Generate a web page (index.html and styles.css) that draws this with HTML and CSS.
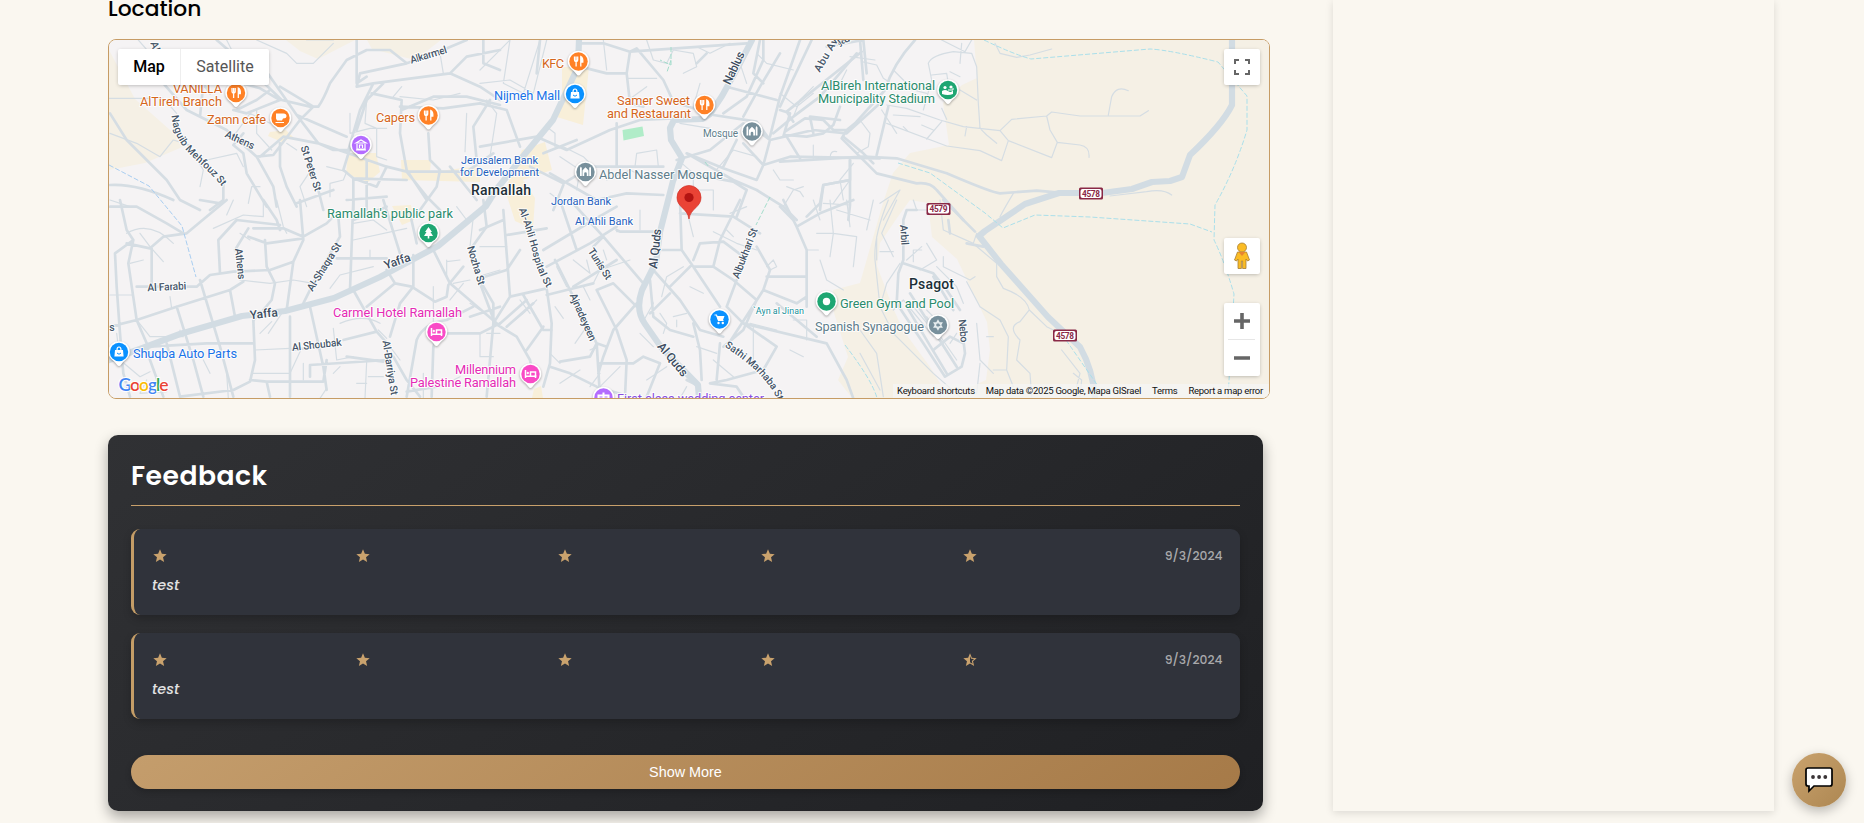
FILE: index.html
```html
<!DOCTYPE html>
<html lang="en">
<head>
<meta charset="utf-8">
<title>Location and feedback</title>
<link rel="stylesheet" href="styles.css">
</head>
<body>
<svg class="defs" width="0" height="0" aria-hidden="true">
  <symbol id="star" viewBox="0 0 24 24"><path d="M12 17.27 18.18 21l-1.64-7.03L22 9.24l-7.19-.61L12 2 9.19 8.63 2 9.24l5.46 4.73L5.82 21z"/></symbol>
  <symbol id="star-half" viewBox="0 0 24 24"><path d="m22 9.24-7.19-.62L12 2 9.19 8.63 2 9.24l5.46 4.73L5.82 21 12 17.27 18.18 21l-1.63-7.03zM12 15.4V6.1l1.71 4.04 4.38.38-3.32 2.88 1 4.28z"/></symbol>
</svg>
<div class="page">
  <main class="main">
    <h2 class="heading">Location</h2>
    <section class="map">
      <svg class="map-canvas" viewBox="109 40 1160 358" width="1160" height="358">
        <defs>
          <g id="pin"><path class="pin-shape" d="M0-10.8a10.8 10.8 0 0 1 10.8 10.8c0 6-5 7.500-8.600 12.500Q0 15.500-2.200 12.500C-5.800 7.500-10.800 6-10.800 0A10.800 10.800 0 0 1 0-10.800z"/><circle r="9.200" fill="currentColor"/></g>
          <g id="fork" fill="none" stroke="#fff" stroke-width="1.300"><path d="M-4-5v3q0 2 1.600 2T-.8-2v-3M-2.400-5V5"/><path d="M2.300 5V-5q2.400 1 2 5.500H2.500" fill="#fff"/></g>
          <g id="bag"><path fill="#fff" d="M-4-2h8l.6 6.500h-9.200z"/><path d="M-2-2q0-3 2-3t2 3" fill="none" stroke="#fff" stroke-width="1.200"/><path d="M-2 1q2 2.500 4 0" fill="none" stroke="#0a91ff"/></g>
          <g id="bed" fill="none" stroke="#fff" stroke-width="1.500"><path d="M-5-4V4M-5 2.200H5V-2H0V2"/><circle cx="-2.700" cy="-1" r=".9" fill="#fff" stroke-width=".6"/><path d="M5 1v3"/></g>
          <path id="mosque" fill="#fff" d="M-5.500 4v-8l.9-1.500.9 1.500v8zM5.500 4v-8l-.9-1.500-.9 1.500v8zM-3 4V-1.500Q-2-3 0-4.800 2-3 3-1.500V4H1.300V1.500a1.300 1.300 0 0 0-2.600 0V4z"/>
          <path id="naguib" d="M174.500 115Q176 138 196 156T224.500 185"/>
          <path id="marhaba" d="M726 344Q752 361 765 376T780 399"/>
          <path id="ahli" d="M521.500 208Q530.500 232 535.500 252T548.500 285"/>
        </defs>
        <rect x="109" y="40" width="1160" height="358" fill="#f5f3f4"/>
        <!-- open land -->
        <g fill="#f5f0e5">
          <path d="M974 40L977 78 962 85 943 103 949 145 910 153 893 173 883 203 860 283 833 290 834 313 848 357 838 380 852 398H1269V40z"/>
          <path d="M286 40H355L318 59 300 51zM367 40H441L415 60 372 49zM109 50L135 99 187 145 145 163 109 170z"/>
        </g>
        <path fill="#f5f3f4" d="M910 200L928 203 932 237 957 259 967 280 987 322 990 350 986 380 973 386 943 388 930 367 903 330 893 308 877 266 880 243 897 218z"/>
        <g fill="#f8efd9">
          <path d="M348 153L376 153 380 172 368 182 346 174zM401 160L431 160 430 172 480 166 480 182 402 180zM562 67L589 67 583 125 557 117 562 99zM522 150L545 142 552 170 523 180 535 198 533 229 515 221 505 190zM270 132L286 130 293 137 282 142 268 136zM392 206L411 205 414 220 402 225zM534 389L541 386 543 398H532z"/>
        </g>
        <path fill="#b0ecc8" d="M622.500 130l20-3.500 1.500 9.500-20.500 4.500z"/>

        <g class="road minor">
          <!-- north west -->
          <g transform="translate(100 0) scale(.33333)">
            <path d="M25 295H190L230 340M115 120L150 160M380 120L400 160H500M470 120L560 160 590 190 640 190 700 130M700 120H620M510 370L450 340 400 410M470 330L470 400 515 450M30 400L110 430 180 470 220 420 270 435M260 430L310 510 300 560M320 480L410 460 430 500M445 610L455 560 480 560M560 430L590 450M750 340V400L810 385H860M800 300L795 370 830 385V470L860 480M900 290L1000 300 1080 280M1160 300L1190 340 1170 470M1095 455L1100 340M1020 160L1030 220M905 260L880 290M680 500L740 515 730 540 690 550 690 590M640 500L600 560 620 620M30 600L90 620"/>
          </g>
          <g transform="translate(480 30) scale(.33333)">
            <path d="M0 120L50 70 90 30 70 160 130 190 180 30M0 160L90 150 160 190 200 30M200 290L225 310V350M370 30L380 120M500 30L520 90 560 100 580 60 640 70 650 110 610 130M660 160L640 230M650 50L690 70 750 40M440 145H530M445 210L500 170M465 410L470 370 530 360 535 410M240 380L300 420 290 480M250 350L310 380 340 410M600 280L690 295M700 430L760 360 830 380M600 395L640 430M640 430V500M750 550L800 530M780 100L800 160M830 70L860 100 940 120M1000 170L960 210 940 260M900 190L950 230 1000 190M1100 120L1070 180M1120 400L1080 450 1090 510M910 530L940 480 970 470M880 420L900 450 940 450M600 480H700V540M380 450L450 420 490 440M210 490L250 520"/>
          </g>
          <g transform="translate(780 30) scale(.33333)">
            <path d="M210 80L285 90M245 95L290 105 310 145 350 170M340 120L400 180 440 190M445 100Q455 75 520 65L575 70 590 110 595 220 600 295 620 315 650 340M485 30L555 65 575 30M545 40L540 100M445 100L455 150 430 240M455 135L500 130 510 190M510 125L540 140M540 180L590 210M320 225L380 235 480 270 550 290 660 302 695 268 800 258 815 246 900 258H1080L1105 242M985 255L995 200Q1010 165 1045 182M800 258L810 300 832 337 815 383 685 332 660 302M832 337L900 345Q930 350 927 382M685 332L665 392 600 362 500 348 320 280M425 285L460 300M440 327L485 275M560 290L555 318M500 268L485 235M305 240L350 310M340 255L420 260M370 290L385 305M645 40L660 70 710 82 750 75 815 57M700 490Q670 540 660 560M990 498L1100 485Q1150 475 1175 495M240 270L270 310 265 350 230 370M100 385V345M150 385Q150 360 170 365M20 470L60 485 70 500M210 525L130 520M210 450L160 520M300 520L360 480 310 570"/>
          </g>
          <!-- south west -->
          <g transform="translate(100 200) scale(.33333)">
            <path d="M490 0V50L430 45 340 85M530 0L550 80 560 100M400 0L380 45M120 100L150 140 190 185M90 190L130 180M210 290L215 325M30 285H100M110 360L150 410H250M240 410V390M50 400L60 480 120 530 150 515M310 480L330 520M460 365L480 340M465 450L570 445M380 520L385 595M140 540L120 580 200 575M600 455L570 520H460M680 565L660 595M640 250L580 240M690 265L720 225 820 200M810 170V150M760 70L820 60 860 90M760 120L920 85M720 370Q790 340 840 370M835 390L860 415M870 440L900 480M700 385L710 480 760 470M800 485L795 595M805 530H850M770 550H800M610 490V540M1040 180V230M1080 180L1040 185M1060 250L1110 240M1000 260V480M970 520V595M1090 250L1050 300M1110 310L1140 330M1140 400V470H1180M1020 560L1080 530M1070 20L1100 60M1120 50L1110 140M1150 225L1200 210M700 520L720 500M80 100Q150 60 220 130M420 100L450 120M420 240L510 250 580 240M545 340L505 400M480 400L515 365"/>
          </g>
          <g transform="translate(480 200) scale(.33333)">
            <path d="M0 140H80M120 300L150 340M80 380L130 340 170 300M60 400H20M280 180L330 220 320 180M340 250L360 210 450 180M380 180L370 150M230 200L260 260M310 260L330 300M225 320L250 355M285 430L320 380M240 490L210 460M330 450L350 440M360 520L330 560M420 500L360 560M240 550L300 510M480 400L520 440M495 355L520 310 515 300M580 350L620 340M590 360V380M545 290L560 230 610 200M540 340L560 370 550 400M625 50L640 110M480 30V90M410 95H530M700 95L770 130 830 150M740 90L760 110M630 260L670 280M810 370L890 390M860 200L880 180 890 200 870 210M930 450L970 470M980 150H1015M1020 180L1040 240 1090 270M1000 0L1020 60M1050 0L1060 100 1130 110 1120 200M1100 0L1110 80M1010 100L1060 100 1050 170M1070 30L1170 60M1180 0L1160 90M940 360L980 360V420M820 380V500M650 440L710 460M700 480L760 530M500 540L560 500M620 560L600 595M660 590L720 595"/>
          </g>
          <!-- south east -->
          <g transform="translate(860 200) scale(.33333)">
            <path d="M85 0Q40 110 45 180L60 320M50 180L50 110M110 0L65 100 100 170M60 155L100 155M160 185V150L185 150M140 180L185 140M250 170V200L330 240 345 230M180 210L230 180 200 130M240 0L250 90 340 130 350 100M345 135L410 190V230L430 265Q500 290 508 330L480 365Q440 380 480 420M320 245L360 320 420 360 445 410 440 510 460 560M508 330L560 380 600 400M480 420L470 480 510 520 515 590M605 450L660 520 650 560M640 520L665 540 660 590M100 330L130 300 220 410M60 320L80 250 120 190M60 320L100 400 220 520 300 590M0 390L50 460 70 590M240 570V590M220 400L260 380M230 200L290 260 310 310M200 330L240 370M160 320L250 430M200 350L290 480M290 400L270 430M350 370L360 480 400 520M360 490L350 580M380 410L400 410M400 510L440 510M160 0L170 30 210 30M0 460L60 570"/>
          </g>
        </g>
        <g class="road">
          <g transform="translate(100 0) scale(.33333)">
            <path d="M350 120L420 180 545 300 630 320H655Q670 300 690 250L740 180 800 150 870 150 920 190 980 170 1100 120M30 340L80 420 200 540 240 600 300 630M30 555Q110 550 220 600M190 250L260 330 290 345 380 390 470 470 520 465 600 360 640 320M500 215L590 345 655 430M590 345L740 410M540 260L640 320M425 250L480 265 540 300 440 340 400 330M410 330L470 300 510 270M430 400L400 435 430 460 440 520 500 620M470 470L520 560 530 620M480 470L550 410 655 430 745 460 860 500 920 515H1100L1180 460M540 430V500L560 560 590 620M655 430L700 450 750 450M750 445L730 510 760 535 920 540M770 120V250L800 230M920 190L780 220 770 260 820 250 1050 220 1100 170 1200 150M820 250L780 330 745 450M850 250L800 300 770 390M815 280L905 300 900 400 920 510 980 600M905 330L1000 290H1100L1200 315M900 320L1030 325 1140 310M985 400L990 480 1020 510 1010 560 960 630M1150 120V190L1200 210M1050 220L1140 260 1200 300M1170 300L1120 380 1130 480M920 515L980 590 1020 630M1050 500L1130 600M860 500L830 560 760 535V630M800 480V630M740 600L860 590M590 610L700 570M300 350L310 250 330 280M655 570L670 630M370 550L370 600 330 630"/>
          </g>
          <g transform="translate(480 30) scale(.33333)">
            <path d="M0 220L80 240 120 350M0 350L170 320 260 360 390 300 480 270 580 265M300 40L370 40 450 65 800 40M300 110L380 130 440 130 450 65 470 55 550 150 580 215 640 235M440 130L450 220 490 230M410 280V410H550M180 30L170 130M190 370L290 330M150 410L250 460 300 430M210 430L350 510 440 490 550 495M250 465L220 540M310 410L410 410M590 390L690 360 790 280 830 300 870 330 1000 300 1100 310 1200 220M740 170L890 210M650 100L680 70M700 255L830 275 870 330M730 250L800 200 850 90 850 30M790 260L840 170 900 70M840 30L820 130 850 160M870 320L900 200 960 30M880 310L940 260 1020 200 1130 70M1040 50L1150 30 1160 130M1000 310L990 260 1080 270M870 330L850 405 930 380 1200 385M790 340L850 405 830 450 730 415 620 370M620 370L760 450 830 480 910 530 950 570M730 410L770 330M590 430L680 440 760 455 800 480 770 560M1110 390V450L1030 465 1020 540M1090 320L1150 370 1180 400"/>
          </g>
          <g transform="translate(780 30) scale(.33333)">
            <path d="M15 305L75 265 130 270 160 300 200 300 185 325 290 430 410 460Q450 455 470 480L550 570M15 315L80 320 130 310 160 285 180 230M240 30L250 150M245 65L20 245 40 275M405 30Q340 100 315 180L225 280 200 300M325 230L290 375M10 320L30 250 0 240M0 230L95 30M20 320L60 385M0 395L250 380 350 385 500 430Q640 490 660 490L770 482 830 487M210 390V525L205 570M210 450L130 465 120 520 80 560M0 530L40 570"/>
          </g>
          <g transform="translate(100 200) scale(.33333)">
            <path d="M30 20L110 20 200 70 250 100M300 0L360 10M60 0L80 90 100 120 85 190 110 360 140 430 150 480 190 590M100 120L45 160 50 260 60 400 70 520 90 590M80 130L150 145 190 110 260 100 380 0M155 145V260L110 260H290L330 225 400 215 510 210 580 185M600 0L610 120 580 185 560 330M460 85H550L610 110 680 70 700 50M490 0L530 60 540 90M360 220L355 120 410 60 540 75M495 120L500 200 525 250 515 300 490 330M445 110L500 130 610 115M445 85L405 150M110 360L230 320 390 270 430 245M300 240L360 440 400 590M230 320L280 480 310 590M390 270L405 350M30 380L110 360M150 440L320 430 460 430M200 430L240 590M460 360L465 480 450 545 400 570 240 590M450 540L500 545 670 545 680 480M500 545L510 590M630 320L670 500 680 570M570 350L570 590M570 450L660 440M730 420L830 395 760 270M830 395L870 440M870 410L900 310 940 260M630 530V495L860 480M750 270L760 0M710 175L860 175M760 60L860 20M850 0L900 160M860 210L885 250 935 260 1005 305 1040 290 1045 255 1090 200M940 165V260M800 320L885 250M1000 150L1050 250 1190 370M1040 400H1140L1200 370M1120 320L1040 360Q970 370 950 420L920 590M880 470L920 540 960 590M1000 440L995 590M1150 0L1160 80 1110 150M1145 250L1180 310V380M1200 320L1110 350M715 50L720 110 650 230 610 310M930 40L950 130M920 575L1010 560M740 470L850 485"/>
          </g>
          <g transform="translate(480 200) scale(.33333)">
            <path d="M70 30L80 160 90 290 40 370 30 480 20 590M80 105L200 85M70 60L0 90M120 150L80 210 0 235M0 250L45 370 110 410 150 480 160 530M90 290L200 265 215 370 210 490 190 560M130 285L190 390H215M160 310L80 380M190 380L140 450M55 375L140 300M200 200L330 130 410 80M190 150L340 60 410 20M240 0L290 150M270 0L370 110 490 250M410 90L420 95H540M370 110L340 140M225 180L350 430 360 590M410 180L280 260M350 270L410 390 440 480 435 590M350 270L400 250 470 320M200 285L260 270 340 250M470 310L400 390 370 470 355 520M210 500L270 520 350 560 450 590M240 485L330 470 350 430 380 440M360 490L460 490 490 470 540 490 500 590M520 210L600 300 660 390 730 410M510 240L520 350 570 390 640 410M600 0L605 150 640 200 720 320M545 150L605 150M635 195L570 260M570 280L510 340M640 200L700 200 760 240 830 300 790 390 730 440M600 40L760 50 840 100M780 0L720 120 700 200M640 180L660 130 730 125 790 170M830 140L870 210 850 270 740 440M770 240L740 320 790 370 890 440 850 510 740 540 690 550M860 230H980V320M850 270L950 310 980 290 980 150 950 80 910 0M950 80L1020 40M790 370L1040 430 1100 540 1120 595M890 310L1010 410M640 370L660 450 665 540M720 430L710 540M690 550L770 560 790 590M620 540L640 550M1020 40L1120 0"/>
          </g>
          <g transform="translate(860 200) scale(.33333)">
            <path d="M170 30H140L130 60V180L115 220 110 310 190 430 255 530 305 500 315 460 310 420M130 190L220 220 260 270 300 330M150 280L290 500M140 320L260 520M220 230L280 330M310 430L270 410 220 450M250 0L345 95M320 130L370 140M265 60L270 100"/>
          </g>
        </g>
        <!-- arterial roads -->
        <g class="road wide">
          <path d="M752 40L738 67 722 96 710 114 702 119 674 120 670 128 671 140 682 158 673 181 660 232M579 40L578 67 553 120 520 160 496 190 486 206 438 246 380 277 334 298 285 311 242 316 180 334 140 349 109 360M660 232L656 262 642 290Q635 310 645 324L661 347 698 385 699 398"/>
          <path d="M1232 40L1232 105Q1222 125 1190 155L1182 177 1170 181 1152 182 1132 189 1102 193H1059L1025 204 985 231 979 236 1001 264 1048 317 1080 347Q1093 370 1095 398"/>
        </g>
        <g class="water"><path d="M984 40Q1013 54 1031 59L1150 49Q1170 50 1218 62L1247 96V130Q1235 170 1215 205L1214 240Q1224 260 1234 294L1228 398M898 163L930 173 985 213 1003 228 1035 215 1090 217 1190 224 1212 232M1066 340L1098 386M845 345Q872 380 877 398"/><path stroke="#a8cdf0" d="M109 165L149 186 182 226 196 277"/><path stroke="#a3dccb" d="M671 47V65L660 60M671 60L667 72M770 197L756 225M705 162L709 167"/></g>

        <!-- place labels -->
        <g class="label street">
          <text y="-1.500" transform="translate(429 57) rotate(-17)" textLength="38">Alkarmel</text>
          <text y="-1.500" transform="translate(239 142) rotate(24)" textLength="31">Athens</text>
          <text y="-1.500" transform="translate(309 169) rotate(72)" textLength="47">St Peter St</text>
          <text y="-1.500" transform="translate(238 264) rotate(84)" textLength="31">Athens</text>
          <text y="-1.500" transform="translate(326 268) rotate(-58)" textLength="55">Al-Shaqra St</text>
          <text y="-1.500" transform="translate(167 289) rotate(-3)" textLength="39">Al Farabi</text>
          <text y="-1.500" transform="translate(317 347) rotate(-6)" textLength="50">Al Shoubak</text>
          <text y="-1.500" transform="translate(474 266) rotate(73)" textLength="40">Nozha St</text>
          <text y="-1.500" transform="translate(388 368) rotate(81)" textLength="55">Al-Barriya St</text>
          <text y="-1.500" transform="translate(598 265) rotate(57)" textLength="35">Tunis St</text>
          <text y="-1.500" transform="translate(581 318) rotate(66)" textLength="51">Ajnadeyeen</text>
          <text y="-1.500" transform="translate(747 254) rotate(-69)" textLength="53">Albukhari St</text>
          <text y="-1.500" transform="translate(902 235) rotate(86)" textLength="20">Arbil</text>
          <text y="-1.500" transform="translate(961 331) rotate(84)" textLength="23">Nebo</text>
          <text y="-1.500" transform="translate(828 56) rotate(-60)" textLength="37">Abu Av</text>
          <text y="-1.500" transform="translate(844 42) rotate(-20)" textLength="13">Iyad</text>
          <text y="-1.500" transform="translate(153 47) rotate(70)">Al</text>
          <text y="-1.500" transform="translate(112 330)">s</text>
          <text class="path-text"><textPath href="#naguib">Naguib Mehfouz St</textPath></text>
          <text class="path-text"><textPath href="#marhaba">Sathi Marhaba St</textPath></text>
          <text class="path-text"><textPath href="#ahli">Al-Ahli Hospital St</textPath></text>
        </g>
        <g class="label avenue">
          <text y="-1.500" transform="translate(736 69) rotate(-65)" textLength="35">Nablus</text>
          <text y="-1.500" transform="translate(398 263.500) rotate(-19)" textLength="27">Yaffa</text>
          <text y="-1.500" transform="translate(264 316) rotate(-6)" textLength="28">Yaffa</text>
          <text y="-1.500" transform="translate(657.500 249) rotate(-84)" textLength="40">Al Quds</text>
          <text y="-1.500" transform="translate(671 361) rotate(50)" textLength="40">Al Quds</text>
        </g>
        <g class="label poi">
          <g fill="#d5661c"><text x="173" y="93" textLength="49">VANILLA</text><text x="140" y="106" textLength="82">AlTireh Branch</text><text x="207" y="124" textLength="59">Zamn cafe</text><text x="376" y="122" textLength="39">Capers</text><text x="542" y="68" textLength="22">KFC</text><text x="617" y="105" textLength="73">Samer Sweet</text><text x="607" y="118" textLength="84">and Restaurant</text></g>
          <g fill="#1a73e8"><text x="494" y="100" textLength="66">Nijmeh Mall</text><text x="133" y="358" textLength="104">Shuqba Auto Parts</text></g>
          <g class="small" fill="#2460bd"><text x="461" y="164" textLength="77">Jerusalem Bank</text><text x="460" y="176" textLength="79">for Development</text><text x="551" y="205" textLength="60">Jordan Bank</text><text x="575" y="224.500" textLength="58">Al Ahli Bank</text></g>
          <g fill="#2a8b6c"><text x="327" y="218" textLength="126">Ramallah's public park</text><text x="821" y="90" textLength="114">AlBireh International</text><text x="818" y="103" textLength="117">Municipality Stadium</text><text x="840" y="308" textLength="114">Green Gym and Pool</text></g>
          <text class="tiny" x="753" y="313.500" fill="#168f9a" textLength="51">`Ayn al Jinan</text>
          <g fill="#607d8b"><text x="599" y="178.500" textLength="124">Abdel Nasser Mosque</text><text class="mosque-label" x="703" y="137" textLength="35">Mosque</text><text x="815" y="331" textLength="109">Spanish Synagogue</text></g>
          <g fill="#e52bb5"><text x="333" y="317" textLength="129">Carmel Hotel Ramallah</text><text x="455" y="374" textLength="61">Millennium</text><text x="410" y="387" textLength="106">Palestine Ramallah</text></g>
          <text x="617" y="403" fill="#8a4de0" textLength="147">First class wedding center</text>
        </g>
        <g class="label city"><text x="471" y="195" textLength="60">Ramallah</text><text x="909" y="288.500" textLength="45">Psagot</text></g>

        <!-- pins -->
        <g color="#ff8126">
          <g transform="translate(236 93)"><use href="#pin"/><use href="#fork"/></g>
          <g transform="translate(428.500 115.500)"><use href="#pin"/><use href="#fork"/></g>
          <g transform="translate(578.500 61.500)"><use href="#pin"/><use href="#fork"/></g>
          <g transform="translate(704.500 105)"><use href="#pin"/><use href="#fork"/></g>
          <g transform="translate(280.500 118)"><use href="#pin"/><path fill="#fff" d="M-4.500-4.500h7.500q3 0 3 2.500T2.500.5l-1 2h-5l-1-2zM-5 4H3.500v1H-5z"/></g>
        </g>
        <g color="#0a91ff">
          <g transform="translate(575 94)"><use href="#pin"/><use href="#bag"/></g>
          <g transform="translate(119 352)"><use href="#pin"/><use href="#bag"/></g>
          <g transform="translate(719.500 319.500)"><use href="#pin"/><path d="M-5-4.500h2l2 5.500H4" fill="none" stroke="#fff" stroke-width="1.200"/><path d="M-3-3.500H5L3.500.5h-5z" fill="#fff"/><circle cx="-1" cy="3.500" r="1.200" fill="#fff"/><circle cx="3.300" cy="3.500" r="1.200" fill="#fff"/></g>
        </g>
        <g color="#b46cff">
          <g transform="translate(361 145)"><use href="#pin"/><path d="M-5-2L0-5 5-2zM-4-1V4H4V-1M-5 5H5M-1.500 3V0h3v3" fill="none" stroke="#fff" stroke-width="1.200"/></g>
          <g transform="translate(603.500 397.500)"><use href="#pin"/><path d="M-5-2H5V1H-5zM0-5v8" fill="none" stroke="#fff" stroke-width="2"/></g>
        </g>
        <g color="#78909c">
          <g transform="translate(585.500 172)"><use href="#pin"/><use href="#mosque"/></g>
          <g transform="translate(752 131.500)"><use href="#pin"/><use href="#mosque"/></g>
          <g transform="translate(938 325)"><use href="#pin"/><path d="M0-4.500L3.900 2.200H-3.900zM0 4.500L3.900-2.200H-3.900z" fill="none" stroke="#e8eef0" stroke-width="1.200"/></g>
        </g>
        <g color="#1ea672">
          <g transform="translate(428.500 233)"><use href="#pin"/><path fill="#fff" d="M0-6L3.500-1H2L4.500 3H.8V5.500H-.8V3H-4.500L-2-1H-3.500z"/></g>
          <g transform="translate(948 90)"><use href="#pin"/><path d="M-6 1q3-2 6 0t5-.5V4q-5 2-11 0z" fill="#fff"/><circle cx="-3" cy="-2.500" r="1.600" fill="#fff"/><circle cx="3" cy="-3" r="1.600" fill="#fff"/><path d="M0 0h5v-2" fill="none" stroke="#fff"/></g>
          <g transform="translate(826.500 301.500)"><use href="#pin"/><circle r="3.700" fill="#fff"/></g>
        </g>
        <g color="#f94bc6">
          <g transform="translate(436.500 332)"><use href="#pin"/><use href="#bed"/></g>
          <g transform="translate(530.500 374)"><use href="#pin"/><use href="#bed"/></g>
        </g>
        <path d="M689 219C687.500 208 677 207.500 677 197.500a12 12 0 0 1 24 0C701 207.500 690.500 208 689 219z" fill="#ea4335" stroke="#d02f25" stroke-width=".7"/><circle cx="689" cy="197.500" r="4.600" fill="#b31412"/>

        <g class="shield">
          <g transform="translate(1091 193.500)"><rect class="plate" x="-12" y="-6" width="24" height="12" rx="1.500"/><rect x="-10.500" y="-4.500" width="21" height="9" rx="2"/><text y="3" textLength="18">4578</text></g>
          <g transform="translate(938.500 209)"><rect class="plate" x="-12" y="-6" width="24" height="12" rx="1.500"/><rect x="-10.500" y="-4.500" width="21" height="9" rx="2"/><text y="3" textLength="18">4579</text></g>
          <g transform="translate(1065 335.500)"><rect class="plate" x="-12" y="-6" width="24" height="12" rx="1.500"/><rect x="-10.500" y="-4.500" width="21" height="9" rx="2"/><text y="3" textLength="18">4578</text></g>
        </g>
        <text class="google" x="118.500" y="391" textLength="50"><tspan fill="#4285f4">G</tspan><tspan fill="#ea4335">o</tspan><tspan fill="#fbbc05">o</tspan><tspan fill="#4285f4">g</tspan><tspan fill="#34a853">l</tspan><tspan fill="#ea4335">e</tspan></text>
      </svg>
      <div class="map-types"><span class="type active">Map</span><span class="type">Satellite</span></div>
      <div class="ctl fullscreen"><svg width="18" height="18" viewBox="0 0 18 18"><path d="M2 6V2H6M12 2h4V6M16 12v4H12M6 16H2V12" fill="none" stroke="#666" stroke-width="2"/></svg></div>
      <div class="ctl pegman"><svg width="18" height="28" viewBox="0 0 18 28"><g fill="#fbbc24" stroke="#a67d35" stroke-width=".8"><path d="M4.500 10h9l3 8-2 1-1.500-2V26.500H9.600V19H8.400v7.500H5V17l-1.500 2-2-1z"/><circle cx="9" cy="5.500" r="4.500"/></g><path d="M5.500 10h7L9 14z" fill="#e78432"/></svg></div>
      <div class="ctl zoom"><svg width="36" height="73" viewBox="0 0 36 73"><path d="M10 18H26M18 10V26M10 55H26" stroke="#666" stroke-width="3.600"/><path d="M4 36.500H31" stroke="#e6e6e6"/></svg></div>
      <div class="legal"><span>Keyboard shortcuts</span><span>Map data ©2025 Google, Mapa GISrael</span><span>Terms</span><span>Report a map error</span></div>
    </section>

    <section class="feedback">
      <h3 class="title">Feedback</h3>
      <article class="review">
        <div class="rating">
          <svg class="star"><use href="#star"/></svg><svg class="star"><use href="#star"/></svg><svg class="star"><use href="#star"/></svg><svg class="star"><use href="#star"/></svg><svg class="star"><use href="#star"/></svg>
          <time class="date">9/3/2024</time>
        </div>
        <p class="comment">test</p>
      </article>
      <article class="review">
        <div class="rating">
          <svg class="star"><use href="#star"/></svg><svg class="star"><use href="#star"/></svg><svg class="star"><use href="#star"/></svg><svg class="star"><use href="#star"/></svg><svg class="star"><use href="#star-half"/></svg>
          <time class="date">9/3/2024</time>
        </div>
        <p class="comment">test</p>
      </article>
      <button class="more">Show More</button>
    </section>
  </main>
  <aside class="side"></aside>
</div>
<button class="chat" aria-label="Chat"><svg width="30" height="28" viewBox="0 0 30 28"><path d="M4 2H26Q28 2 28 4V18Q28 20 26 20H10L5 25V20H4Q2 20 2 18V4Q2 2 4 2z" fill="#fff" stroke="#000" stroke-width="1.700"/><g fill="#3a3436"><circle cx="9" cy="11" r="1.900"/><circle cx="15.100" cy="11" r="1.900"/><circle cx="21.300" cy="11" r="1.900"/></g></svg></button>
</body>
</html>
```
FILE: styles.css
```css
* { box-sizing: border-box; }
body { margin: 0; height: 823px; overflow: hidden; background: #faf7f0; font-family: Poppins, Inter, "Liberation Sans", sans-serif; }
.defs { position: absolute; }
.page { display: flex; align-items: flex-start; gap: 63px; padding-left: 108px; }
.main { width: 1162px; flex: none; }
.heading { margin: 0; height: 39px; font-size: 21.800px; line-height: 18px; font-weight: 500; color: #000; }
.map { position: relative; height: 360px; border: 1px solid #c69c65; border-radius: 8px; overflow: hidden; font-family: Roboto, sans-serif; }
.map-canvas { display: block; }
.road { fill: none; stroke: #d5dde3; stroke-width: 2.400; stroke-linejoin: round; stroke-linecap: round; }
.road > g { stroke-width: 8; }
.minor > g { stroke-width: 3.600; }
.wide { stroke-width: 6.200; stroke: #d2dce3; }
.water { fill: none; stroke: #aadfea; stroke-width: 1; stroke-dasharray: 5 2; }
.pin-shape { fill: #fff; filter: drop-shadow(0 1px 1px #0005); }
.label { paint-order: stroke; stroke: #fffd; stroke-width: 2px; stroke-linejoin: round; }
.street { fill: #465669; font-size: 10.500px; font-weight: 500; text-anchor: middle; dominant-baseline: middle; }
.path-text { text-anchor: start; font-size: 10.200px; }
.avenue { fill: #3d4d60; font-size: 12px; font-weight: 500; text-anchor: middle; dominant-baseline: middle; }
.poi { font-size: 12.800px; }
.small { font-size: 11px; }
.mosque-label { font-size: 10px; }
.tiny { font-size: 9px; }
.city { font-size: 14px; font-weight: 500; fill: #202f38; }
.shield rect { fill: #fff; }
.shield .plate { fill: #8a2946; }
.shield text { fill: #8a2946; font-size: 8.300px; font-weight: 700; text-anchor: middle; }
.google { font: 600 17.500px Lato, sans-serif; paint-order: stroke; stroke: #fff; stroke-width: 2px; }
.map-types, .ctl { position: absolute; background: #fff; border-radius: 2px; box-shadow: 0 1px 4px -1px #0005; }
.map-types { left: 9px; top: 9px; display: flex; width: 151px; height: 36px; font-size: 16px; line-height: 36px; }
.type { flex: 1; text-align: center; color: #565656; }
.type.active { flex: 0 0 63px; color: #000; font-weight: 500; border-right: 1px solid #eee; }
.ctl { right: 9px; width: 36px; height: 36px; display: grid; place-items: center; }
.fullscreen { top: 9px; }
.pegman { top: 198px; }
.zoom { top: 263px; height: 73px; }
.legal { position: absolute; right: 0; bottom: 0; display: flex; gap: 11px; padding: 0 6px 0 4px; height: 14px; background: #f5f5f5b8; color: #111; font-size: 9.500px; letter-spacing: -.26px; line-height: 13px; white-space: nowrap; }
.feedback { margin-top: 36px; width: 1155px; height: 376px; padding: 23px; border-radius: 10px; background: linear-gradient(145deg, #303134, #1f2023); box-shadow: 0 6px 14px #0005; }
.title { margin: 0 0 23px; height: 48px; padding-top: 1px; border-bottom: 1px solid #c8a06b; color: #fff; font-size: 26.600px; line-height: 34px; font-weight: 600; letter-spacing: .5px; }
.review { height: 86px; margin-bottom: 18px; padding: 18px 17.500px 0 18px; border-left: 3px solid #c49d67; border-radius: 9px; background: #30333b; box-shadow: 0 4px 8px #0003; }
.rating { display: flex; justify-content: space-between; align-items: center; height: 17px; padding-left: .4px; }
.star { width: 16px; height: 16px; fill: #c9a26d; flex: none; }
.date { display: flex; justify-content: flex-end; width: 57.500px; color: #a9a9ab; font-size: 12.300px; font-weight: 500; white-space: nowrap; }
.comment { margin: 11px 0 0; color: #e2e2e2; font-size: 14.400px; line-height: 20px; font-weight: 500; font-style: italic; }
.more { display: block; margin-top: 36px; width: 100%; height: 34px; border: 0; border-radius: 17px; background: linear-gradient(145deg, #c49d6c, #a67a48); color: #fff; font: 14.400px/34px "Liberation Sans", Arial, sans-serif; box-shadow: 0 3px 6px #0003; padding: 0; }
.side { width: 441px; height: 811px; background: #faf7f0; box-shadow: 0 2px 8px #0000001f; }
.chat { position: fixed; right: 18px; bottom: 16px; width: 54px; height: 54px; border: 0; padding: 0; border-radius: 50%; display: grid; place-items: center; background: linear-gradient(135deg, #c9a26d, #ad8752); box-shadow: 0 4px 12px #0004; }
```
